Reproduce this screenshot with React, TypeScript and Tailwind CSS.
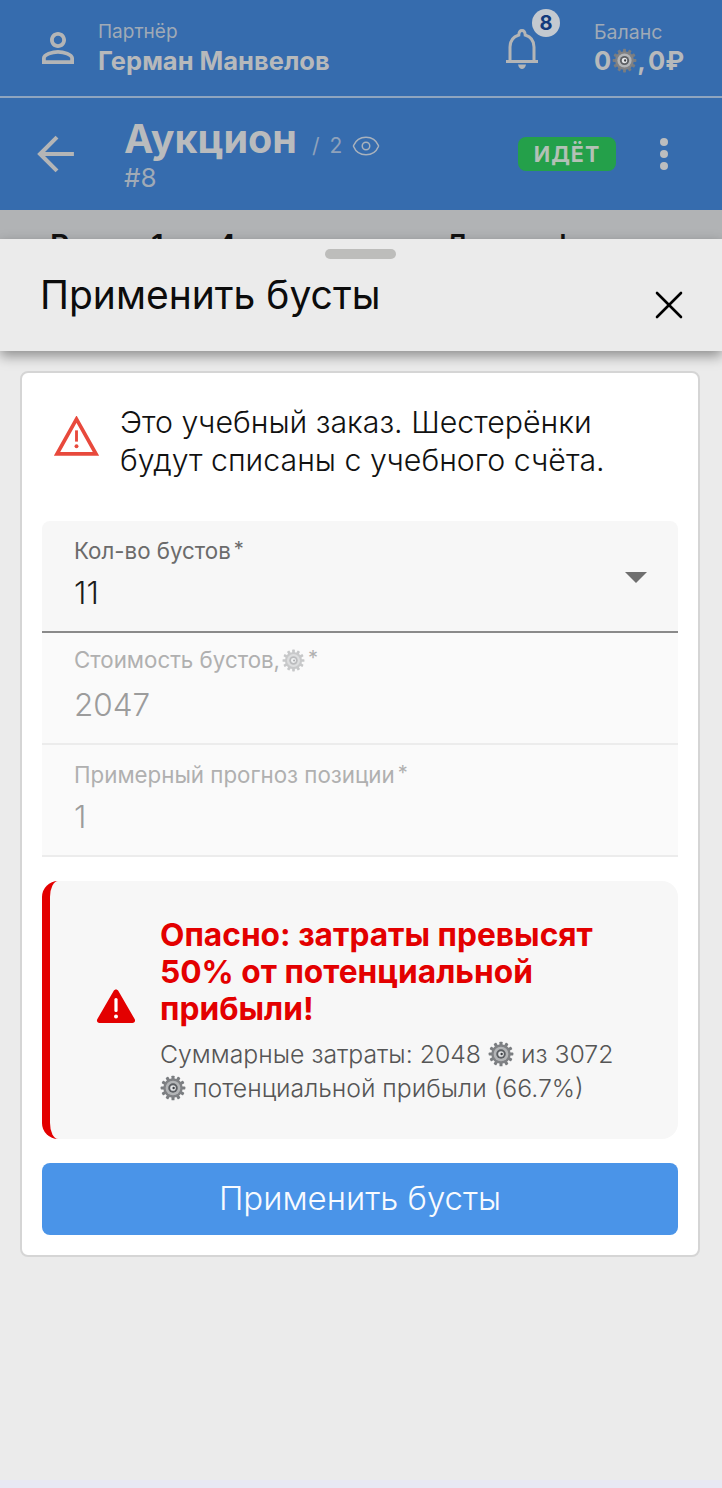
import { Eye, X } from "lucide-react"

function Gear({ className, faded }: { className: string; faded?: boolean }) {
  const teeth = Array.from({ length: 12 }, (_, i) => i * 30)
  return (
    <svg viewBox="0 0 24 24" className={`inline-block shrink-0 ${faded ? "opacity-40" : ""} ${className}`}>
      {teeth.map((a) => (
        <rect key={a} x="10.6" y="0.6" width="2.8" height="5" rx="0.6" fill="#7a7d80" transform={`rotate(${a} 12 12)`} />
      ))}
      <circle cx="12" cy="12" r="9" fill="#808285" />
      <circle cx="12" cy="12" r="6.8" fill="#b3b5b7" />
      <circle cx="12" cy="12" r="4.4" fill="#5c5f63" />
      <circle cx="12" cy="12" r="2.6" fill="#e3e5e7" />
      <circle cx="12.6" cy="12" r="1.1" fill="#3c3f43" />
    </svg>
  )
}

function Field({ label, value, active, gear }: { label: string; value: string; active?: boolean; gear?: boolean }) {
  return (
    <div
      className={`relative h-[112px] px-8 ${gear ? "pt-[14px]" : "pt-[17px]"} ${
        active ? "rounded-t-lg border-b-2 border-[#8a8a8a] bg-[#f7f7f7]" : "border-b-2 border-[#ececec] bg-[#fafafa]"
      }`}
    >
      <div className={`flex h-[26px] items-center text-[22.3px] leading-[26px] ${active ? "text-[#6b6b6b]" : "text-[#b0b0b0]"}`}>
        {label}
        {gear && <Gear faded className="ml-[2px] size-[23px]" />}
        <span className="ml-[3px] -mt-[4px] text-[20px]">*</span>
      </div>
      <div
        className={`${gear ? "mt-[13px]" : "mt-[10px]"} text-[31.5px] font-light leading-[38px] ${
          active ? "text-[#1c1c1c]" : "text-[#9c9c9c]"
        }`}
      >
        {value}
      </div>
      {active && (
        <svg viewBox="0 0 22 11" className="absolute right-[31px] top-[51px] h-[11px] w-[22px]">
          <path d="M0 0 H22 L11 11 Z" fill="#6f6f6f" />
        </svg>
      )}
    </div>
  )
}

export default function App() {
  return (
    <div className="relative h-[1488px] w-[722px] overflow-hidden bg-[#ebebeb] font-['Inter',sans-serif]">
      <div className="bg-[#366cae]">
        <div className="flex h-[98px] items-center border-b-2 border-[#8fa5bf] pl-[34px] pr-[37px]">
          <svg viewBox="0 0 24 24" className="size-[48px]" fill="#b4b5b6">
            <path d="M12 5.9c1.16 0 2.1.94 2.1 2.1s-.94 2.1-2.1 2.1S9.9 9.16 9.9 8s.94-2.1 2.1-2.1m0 9c2.97 0 6.1 1.46 6.1 2.1v1.1H5.9V17c0-.64 3.13-2.1 6.1-2.1M12 4C9.79 4 8 5.79 8 8s1.79 4 4 4 4-1.79 4-4-1.79-4-4-4zm0 9c-2.67 0-8 1.34-8 4v3h16v-3c0-2.66-5.33-4-8-4z" />
          </svg>
          <div className="ml-[16px]">
            <div className="text-[19px] leading-[22px] text-[#a0aab6]">Партнёр</div>
            <div className="mt-[3px] text-[25.5px] font-bold leading-[30px] text-[#b7b9bb]">Герман Манвелов</div>
          </div>
          <div className="relative ml-auto mr-[56px] mt-[2px]">
            <svg viewBox="0 0 32 40" className="h-[40px] w-[32px]">
              <path
                d="M4 32 V18 C4 11 8 7.5 12.8 6 C13 3 14 1.5 16 1.5 C18 1.5 19 3 19.2 6 C24 7.5 28 11 28 18 V32"
                fill="none"
                stroke="#b4b5b6"
                strokeWidth="3"
              />
              <rect x="0" y="31" width="32" height="3" fill="#b4b5b6" />
              <path d="M12 35.5 H20 C19.5 38.5 17.5 40 16 40 C14.5 40 12.5 38.5 12 35.5 Z" fill="#b4b5b6" />
            </svg>
            <span className="absolute -right-[22px] -top-[20px] flex size-[28px] items-center justify-center rounded-full bg-[#c3c9d0] text-[20px] font-bold text-[#123a7c]">
              8
            </span>
          </div>
          <div className="w-[91px]">
            <div className="text-[19.5px] leading-[22px] text-[#a0aab6]">Баланс</div>
            <div className="mt-[3px] flex items-center whitespace-nowrap text-[25.5px] font-bold leading-[30px] [word-spacing:-3px] text-[#b7b9bb]">
              0<Gear className="ml-[1px] size-[25px]" />, 0₽
            </div>
          </div>
        </div>
        <div className="flex h-[112px] items-center pl-[28px] pr-[54px]">
          <svg viewBox="0 0 24 24" className="size-[58px]" fill="none" stroke="#b4b5b6" strokeWidth="1.7">
            <path d="M19 12H5" />
            <path d="m12 19-7-7 7-7" />
          </svg>
          <div className="ml-[38px] pt-[3px]">
            <div className="flex h-[42px] items-center">
              <span className="text-[39.5px] font-bold leading-[42px] text-[#b9bbbd]">Аукцион</span>
              <span className="ml-[15px] mt-[13px] text-[21px] [word-spacing:4px] text-[#8fa2bb]">/ 2</span>
              <Eye className="ml-[9px] mt-[13px] size-[30px] text-[#a9b2bd]" strokeWidth={1.2} />
            </div>
            <div className="mt-[3px] text-[26px] leading-[30px] text-[#a0aab6]">#8</div>
          </div>
          <span className="ml-auto flex h-[34px] w-[98px] items-center justify-center rounded-lg bg-[#24a04a] text-[21.5px] font-bold tracking-[1px] text-[#b3c1b6]">
            ИДЁТ
          </span>
          <div className="ml-[44px] flex flex-col gap-[4px]">
            <span className="size-[8px] rounded-full bg-[#bcbdbe]" />
            <span className="size-[8px] rounded-full bg-[#bcbdbe]" />
            <span className="size-[8px] rounded-full bg-[#bcbdbe]" />
          </div>
        </div>
      </div>
      <div className="flex h-[29px] items-start bg-[#b1b3b5] pl-[50px] pt-[18px] font-semibold leading-[34px] text-[#111111]">
        <span className="w-[395px] text-[30px] [word-spacing:2px]">Раунд 1 из 4</span>
        <span className="text-[27px]">Допинг ф</span>
      </div>

      <div className="absolute inset-x-0 bottom-0 top-[239px] bg-[#ebebeb]">
        <div className="relative h-[112px] bg-[#ebebeb] shadow-[0_5px_12px_rgba(0,0,0,0.4)]">
          <div className="absolute left-[325px] top-[10px] h-[10px] w-[71px] rounded-full bg-[#bdbdbb]" />
          <div className="pl-[40px] pt-[34px] text-[39px] leading-[44px] text-[#0c0c0c]">Применить бусты</div>
          <X className="absolute left-[645px] top-[42px] size-[48px] text-black" strokeWidth={1.3} />
        </div>

        <div className="ml-[20px] mt-[20px] h-[886px] w-[680px] rounded-lg border-2 border-[#d5d5d5] bg-white px-[20px]">
          <div className="flex h-[148px] items-start pt-[30px]">
            <svg viewBox="0 0 44 40" className="ml-[12px] mt-[13px] h-[41px] w-[45px] shrink-0">
              <path d="M22 3 L41 37 H3 Z" fill="none" stroke="#e8493c" strokeWidth="3.6" />
              <rect x="20.6" y="14" width="2.8" height="11" fill="#e8493c" />
              <circle cx="22" cy="29.5" r="1.9" fill="#e8493c" />
            </svg>
            <div className="ml-[21px] whitespace-nowrap text-[30.3px] font-light leading-[38px] text-[#111111]">
              Это учебный заказ. Шестерёнки
              <br />
              будут списаны с учебного счёта.
            </div>
          </div>

          <Field label="Кол-во бустов" value="11" active />
          <Field label="Стоимость бустов," value="2047" gear />
          <Field label="Примерный прогноз позиции" value="1" />

          <div className="mt-[24px] flex h-[258px] items-center rounded-2xl border-l-[8px] border-[#e30000] bg-[#f7f7f7] pl-[46px]">
            <svg viewBox="0 0 40 36" className="-mt-[8px] h-[36px] w-[40px] shrink-0">
              <path
                d="M20 1.5 C21 1.5 21.8 2 22.4 3 L38.6 31 C39.8 33 38.6 35 36.4 35 H3.6 C1.4 35 0.2 33 1.4 31 L17.6 3 C18.2 2 19 1.5 20 1.5 Z"
                fill="#e30000"
              />
              <rect x="18.4" y="10" width="3.2" height="14" rx="1.5" fill="#ffffff" />
              <circle cx="20" cy="28.5" r="2" fill="#ffffff" />
            </svg>
            <div className="ml-[24px]">
              <div className="whitespace-nowrap text-[31.7px] font-bold leading-[37px] text-[#e30000]">
                Опасно: затраты превысят
                <br />
                50% от потенциальной
                <br />
                прибыли!
              </div>
              <div className="mt-[10px] whitespace-nowrap text-[24.8px] font-light leading-[34px] text-[#555555]">
                <div className="flex items-center">
                  Суммарные затраты: 2048 <Gear className="mx-[7px] size-[26px]" /> из 3072
                </div>
                <div className="flex items-center">
                  <Gear className="mr-[7px] size-[26px]" /> потенциальной прибыли (66.7%)
                </div>
              </div>
            </div>
          </div>

          <div className="mt-[24px] flex h-[72px] items-center justify-center rounded-lg bg-[#4a94e8] text-[33px] font-light text-[#f8fbff]">
            Применить бусты
          </div>
        </div>
        <div className="absolute inset-x-0 bottom-0 h-[8px] bg-[#e8e9f3]" />
      </div>
    </div>
  )
}
